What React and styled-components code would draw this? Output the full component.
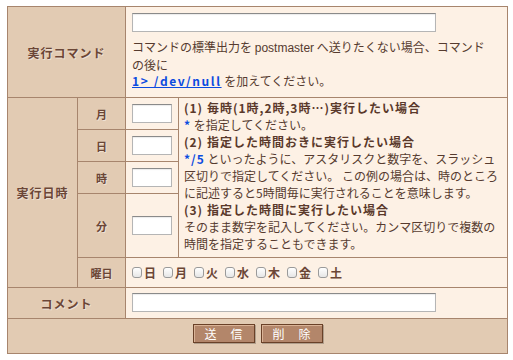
import React from "react";
import styled, { createGlobalStyle } from "styled-components";

const Global = createGlobalStyle`
  html, body { background: #ffffff; }
  body {
    margin: 6px 0 0 7px;
    font-family: "Noto Sans CJK JP", sans-serif;
    font-size: 12px;
    color: #563b2f;
  }
`;

const BORDER = "#a7856d";
const HEAD = "#e2cbb3";
const CELL = "#fdf1e5";

const Grid = styled.div`
  width: 499px;
  display: grid;
  grid-template-columns: 69px 47px 52px 1fr;
  grid-template-rows: 90px 31px 31px 31px 63px 29px 30px 34px;
  gap: 1px;
  background: ${BORDER};
  border: 1px solid ${BORDER};
`;

const Head = styled.div`
  grid-column: ${(p) => p.$col};
  grid-row: ${(p) => p.$row};
  background: ${HEAD};
  display: flex;
  align-items: center;
  justify-content: center;
  font-weight: bold;
  font-size: ${(p) => (p.$small ? "11px" : "12px")};
  letter-spacing: ${(p) => (p.$small ? "0" : "1px")};
  color: #6b4636;
  text-shadow: 1px 1px 0 rgba(255, 255, 255, 0.45);
`;

const Cell = styled.div`
  grid-column: ${(p) => p.$col};
  grid-row: ${(p) => p.$row};
  background: ${CELL};
  display: flex;
  flex-direction: column;
  align-items: ${(p) => (p.$center ? "center" : "flex-start")};
  justify-content: ${(p) => (p.$middle ? "center" : "flex-start")};
  padding: ${(p) => p.$pad || "0"};
`;

const TextInput = styled.input`
  box-sizing: border-box;
  width: ${(p) => p.$w}px;
  height: ${(p) => p.$h || 19}px;
  margin: 0;
  padding: 0 2px;
  background: #ffffff;
  border: 1px solid #b5b5b5;
  border-top-color: #8a8a8a;
  box-shadow: inset 0 1px 1px rgba(0, 0, 0, 0.08);
  font-size: 12px;
  outline: none;
`;

const Note = styled.div`
  margin-top: 7px;
  line-height: 16.5px;
  white-space: nowrap;
`;

const Plain = styled.span`
  font-family: "Liberation Sans", "Noto Sans CJK JP", sans-serif;
`;

const Link = styled.a`
  color: #0b4be0;
  font-weight: bold;
  letter-spacing: 1.6px;
  text-decoration: underline;
`;

const Blue = styled.span`
  color: #0b4be0;
  font-weight: bold;
  letter-spacing: 1px;
`;

const Desc = styled.div`
  line-height: 17px;
  white-space: nowrap;
`;

const Title = styled.div`
  font-weight: bold;
  letter-spacing: 1px;
  color: #5a392b;
`;

const Checks = styled.div`
  display: flex;
  align-items: center;
  gap: 7px;
`;

const CheckItem = styled.label`
  display: flex;
  align-items: center;
  gap: 2px;
  font-weight: bold;
  font-size: 12px;
  color: #6b4636;
`;

const Box = styled.input`
  appearance: none;
  margin: 0;
  width: 10px;
  height: 11px;
  border: 1px solid #9a9a9a;
  border-radius: 3px;
  background: linear-gradient(#ffffff, #e6e6e6);
  box-sizing: border-box;
`;

const ButtonRow = styled.div`
  grid-column: 1 / 5;
  grid-row: 8;
  background: ${HEAD};
  display: flex;
  justify-content: center;
  align-items: flex-start;
  padding-top: 5px;
  gap: 6px;
`;

const Btn = styled.button`
  box-sizing: border-box;
  width: 62px;
  height: 19px;
  margin: 0;
  padding: 0 0 0 1px;
  background: #b3866a;
  border: 1px solid #6a4128;
  box-shadow: inset 1px 1px 0 #d9b396, 1px 1px 0 rgba(0, 0, 0, 0.22);
  color: #ffffff;
  font-family: "Noto Sans CJK JP", sans-serif;
  font-size: 12px;
  letter-spacing: 1px;
  line-height: 17px;
`;

const days = ["日", "月", "火", "水", "木", "金", "土"];
const sub = [
  { label: "月", row: 2 },
  { label: "日", row: 3 },
  { label: "時", row: 4 },
  { label: "分", row: 5 },
];

export default function App() {
  return (
    <>
      <Global />
      <Grid>
        <Head $col="1 / 3" $row="1">実行コマンド</Head>
        <Cell $col="3 / 5" $row="1" $pad="6px 0 0 6px">
          <TextInput type="text" $w={304} />
          <Note>
            コマンドの標準出力を <Plain>postmaster</Plain> へ送りたくない場合、コマンド
            <br />
            の後に
            <br />
            <Link href="#">1&gt; /dev/null</Link> を加えてください。
          </Note>
        </Cell>

        <Head $col="1" $row="2 / 7">実行日時</Head>
        {sub.map((s) => (
          <React.Fragment key={s.label}>
            <Head $col="2" $row={String(s.row)} $small>
              {s.label}
            </Head>
            <Cell $col="3" $row={String(s.row)} $center $middle>
              <TextInput type="text" $w={40} $h={19} />
            </Cell>
          </React.Fragment>
        ))}
        <Cell $col="4" $row="2 / 6" $pad="1px 0 0 5px">
          <Desc>
            <Title>(1) 毎時(1時,2時,3時…)実行したい場合</Title>
            <div>
              <Blue>*</Blue> を指定してください。
            </div>
            <Title>(2) 指定した時間おきに実行したい場合</Title>
            <div>
              <Blue>*/5</Blue> といったように、アスタリスクと数字を、スラッシュ
            </div>
            <div>区切りで指定してください。 この例の場合は、時のところ</div>
            <div>に記述すると5時間毎に実行されることを意味します。</div>
            <Title>(3) 指定した時間に実行したい場合</Title>
            <div>そのまま数字を記入してください。カンマ区切りで複数の</div>
            <div>時間を指定することもできます。</div>
          </Desc>
        </Cell>

        <Head $col="2" $row="6" $small>曜日</Head>
        <Cell $col="3 / 5" $row="6" $middle $pad="0 0 0 6px">
          <Checks>
            {days.map((d) => (
              <CheckItem key={d}>
                <Box type="checkbox" />
                {d}
              </CheckItem>
            ))}
          </Checks>
        </Cell>

        <Head $col="1 / 3" $row="7">コメント</Head>
        <Cell $col="3 / 5" $row="7" $pad="5px 0 0 6px">
          <TextInput type="text" $w={304} />
        </Cell>

        <ButtonRow>
          <Btn type="button">送　信</Btn>
          <Btn type="button">削　除</Btn>
        </ButtonRow>
      </Grid>
    </>
  );
}
